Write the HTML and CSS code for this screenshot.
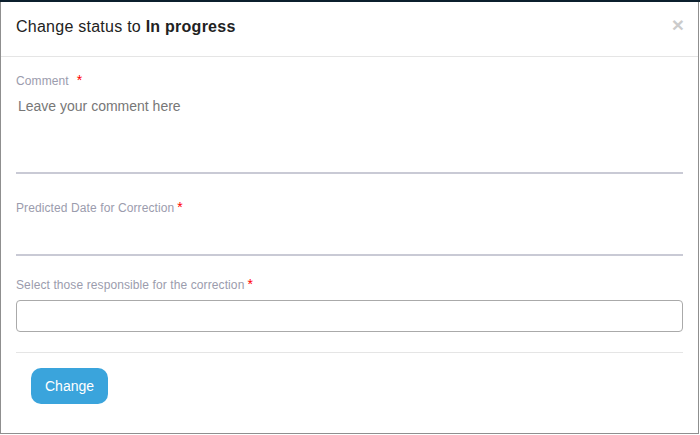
FILE: index.html
```html
<!DOCTYPE html>
<html lang="en">
<head>
<meta charset="utf-8">
<title>Change status</title>
<link rel="stylesheet" href="styles.css">
</head>
<body>
<div class="page">
  <div class="modal">
    <div class="modal-header">
      <h4 class="modal-title">Change status to <strong>In progress</strong></h4>
      <button type="button" class="close" aria-label="Close">×</button>
    </div>
    <div class="modal-body">
      <div class="group group-comment">
        <label class="label label-comment">Comment<span class="req">*</span></label>
        <textarea class="textarea" placeholder="Leave your comment here"></textarea>
      </div>
      <div class="group group-date">
        <label class="label">Predicted Date for Correction<span class="req req-near">*</span></label>
        <input class="line-input" type="text">
      </div>
      <div class="group group-select">
        <label class="label label-select">Select those responsible for the correction<span class="req req-near">*</span></label>
        <div class="select-box"></div>
      </div>
      <div class="modal-footer">
        <button type="button" class="btn">Change</button>
      </div>
    </div>
  </div>
</div>
</body>
</html>
```
FILE: styles.css
```css
html, body {
  margin: 0;
  padding: 0;
  background: #ffffff;
}
body {
  width: 700px;
  height: 435px;
  overflow: hidden;
  font-family: "Liberation Sans", Arial, sans-serif;
}
.page {
  border-top: 2px solid #0b1f2d;
  height: 433px;
  box-sizing: border-box;
}
.modal {
  width: 699px;
  height: 432px;
  box-sizing: border-box;
  border: 1px solid #8f8f8f;
  border-top: none;
  background: #fff;
  display: flex;
  flex-direction: column;
}
.modal-header {
  display: flex;
  justify-content: space-between;
  align-items: flex-start;
  padding: 15px 14px 19px 15px;
  border-bottom: 1px solid #e5e5e5;
}
.modal-title {
  margin: 0;
  font-size: 16px;
  line-height: 20px;
  font-weight: normal;
  letter-spacing: 0.25px;
  color: #222;
}
.modal-title strong {
  font-weight: bold;
  color: #222;
}
.close {
  margin: -3px 0 0 0;
  padding: 0;
  border: none;
  background: none;
  font-family: "Liberation Sans", Arial, sans-serif;
  font-size: 21px;
  font-weight: bold;
  line-height: 21px;
  color: #000;
  opacity: 0.2;
  cursor: pointer;
}
.modal-body {
  padding: 16px 15px 0 15px;
  display: flex;
  flex-direction: column;
}
.label {
  display: block;
  height: 17px;
  font-size: 12px;
  line-height: 17px;
  letter-spacing: 0.1px;
  color: #9b9cad;
}
.req {
  color: #f00;
  font-size: 14px;
  line-height: 0;
  margin-left: 8px;
}
.req-near {
  margin-left: 3px;
}
.textarea {
  display: block;
  width: 100%;
  height: 84px;
  box-sizing: border-box;
  margin: 0;
  padding: 6px 2px;
  border: none;
  border-bottom: 2px solid #c9cad5;
  outline: none;
  resize: none;
  font-family: "Liberation Sans", Arial, sans-serif;
  font-size: 14px;
  line-height: 20px;
  color: #555;
  background: transparent;
}
.textarea::placeholder {
  color: #777;
}
.group-date {
  margin-top: 26px;
}
.line-input {
  display: block;
  width: 100%;
  height: 39px;
  box-sizing: border-box;
  margin: 0;
  padding: 0 2px;
  border: none;
  border-bottom: 2px solid #c9cad5;
  outline: none;
  font-family: "Liberation Sans", Arial, sans-serif;
  font-size: 14px;
  background: transparent;
}
.group-select {
  margin-top: 21px;
}
.label-select {
  margin-bottom: 6px;
}
.select-box {
  height: 32px;
  box-sizing: border-box;
  border: 1px solid #aaa;
  border-radius: 4px;
  background: #fff;
}
.modal-footer {
  margin-top: 20px;
  border-top: 1px solid #e5e5e5;
  padding: 15px 15px;
  display: flex;
}
.btn {
  height: 36px;
  padding: 0 14px;
  border: none;
  border-radius: 10px;
  background: #3aa4dc;
  color: #fff;
  font-family: "Liberation Sans", Arial, sans-serif;
  font-size: 14px;
  line-height: 36px;
  cursor: pointer;
}
```
